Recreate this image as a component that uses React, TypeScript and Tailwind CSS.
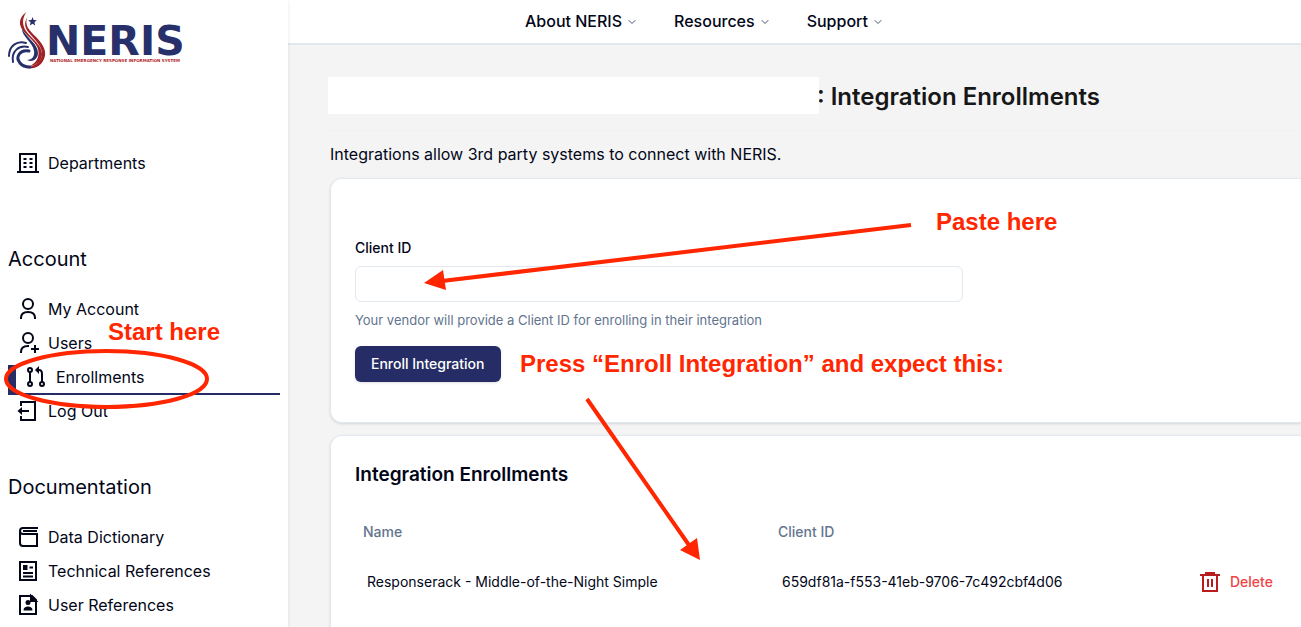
import React from "react";
import { ChevronDown } from "lucide-react";

type IconName =
  | "building"
  | "user"
  | "userPlus"
  | "pull"
  | "logout"
  | "book"
  | "article"
  | "contact";

type NavItem = { label: string; icon: IconName; active?: boolean };

const iconPaths: Record<IconName, React.ReactNode> = {
  building: (
    <>
      <path d="M4 21V3h16v18M1 21h22" />
      <path d="M7.5 8h3M13.5 8h3M7.5 12h3M13.5 12h3M7.5 16h3M13.5 16h3" />
    </>
  ),
  user: (
    <>
      <circle cx="12" cy="7" r="5" />
      <path d="M5 22v-1c0-4 3-6 7-6s7 2 7 6v1" />
    </>
  ),
  userPlus: (
    <>
      <circle cx="12" cy="7" r="5" />
      <path d="M5 22v-1c0-4 3-6 7-6h1M19 14v8M15 18h8" />
    </>
  ),
  pull: (
    <>
      <circle cx="6" cy="5" r="2" />
      <circle cx="6" cy="19" r="2" />
      <circle cx="18" cy="19" r="2" />
      <path d="M6 7v10M18 17V9q0-4-3-4h-2" />
      <path d="M15 1v8l-4-4z" fill="currentColor" stroke="none" />
    </>
  ),
  logout: (
    <>
      <path d="M5 7V3h14v18H5v-4M13 12H3" />
      <path d="M6 8v8L1.500 12z" fill="currentColor" stroke="none" />
    </>
  ),
  book: (
    <path d="M22 3H7Q4 3 4 6v12q0 3 3 3h14V9H7Q4 9 4 6M7 6h14" />
  ),
  article: (
    <>
      <path d="M4 3h16v18H4zM7 14h10M7 17.500h10M13.500 8.500H17" />
      <path d="M7 6h4.500v5H7z" fill="currentColor" stroke="none" />
    </>
  ),
  contact: (
    <>
      <path d="M4 3h12l4 4v14H4z" />
      <path d="M15 3v5h5z" fill="currentColor" />
      <circle cx="12" cy="9.500" r="2.500" fill="currentColor" stroke="none" />
      <path d="M7.500 17.500c0-3 2-4 4.500-4s4.500 1 4.500 4z" fill="currentColor" stroke="none" />
    </>
  ),
};

const accountItems: NavItem[] = [
  { label: "My Account", icon: "user" },
  { label: "Users", icon: "userPlus" },
  { label: "Enrollments", icon: "pull", active: true },
  { label: "Log Out", icon: "logout" },
];

const documentationItems: NavItem[] = [
  { label: "Data Dictionary", icon: "book" },
  { label: "Technical References", icon: "article" },
  { label: "User References", icon: "contact" },
];

const menus = ["About NERIS", "Resources", "Support"];

const enrollments = [
  {
    name: "Responserack - Middle-of-the-Night Simple",
    clientId: "659df81a-f553-41eb-9706-7c492cbf4d06",
  },
];

const Icon = ({ name }: { name: IconName }) => (
  <svg
    viewBox="0 0 24 24"
    className="size-6 shrink-0"
    fill="none"
    stroke="currentColor"
    strokeWidth="2"
    aria-hidden="true"
  >
    {iconPaths[name]}
  </svg>
);

const Logo = () => (
  <a href="#" aria-label="NERIS home" className="block">
    <svg width="184" height="60" viewBox="0 0 184 60" aria-hidden="true">
      {/* flame */}
      <path
        d="M18.500 1C10 7 10 15 17 22C25 30 33 36 30 46C29 50 26 53 22 55C30 54 34 49 34 43C34 34 24 28 18 20C14 14 14 7 18.500 1z"
        fill="#9f2226"
      />
      <path
        d="M19.500 6C16 14 21 19 28 26C36 34 40 42 35 50C31 57 24 58 18 57C27 55 33 51 34 44C35 36 27 29 22 23C16 17 16 11 19.500 6z"
        fill="#9f2226"
      />
      <path
        d="M14 18C14 26 25 31 26 40C27 45 24 49 19 49C24 52 30 48 30 42C30 33 19 27 14 18z"
        fill="#27306b"
      />
      {/* water */}
      <g fill="none" stroke="#27306b" strokeLinecap="round">
        <path d="M1 45C1 35 9 29 18 32" strokeWidth="2" />
        <path d="M5 51C3 40 11 34 20 36" strokeWidth="2" />
        <path d="M21 40C12 38 7 46 12 52Q15 56 22 56" strokeWidth="3" />
      </g>
      <path
        d="M24.500 6l1.100 3 3.300.2-2.500 2.100.8 3.200-2.700-1.700-2.700 1.700.8-3.200-2.500-2.100 3.300-.2z"
        fill="#27306b"
      />
      <text
        x="38"
        y="44"
        fill="#27306b"
        className="font-['DejaVu_Sans'] text-[41px] font-bold"
      >
        NERIS
      </text>
      <text
        x="42"
        y="51"
        fill="#b3262b"
        className="font-['DejaVu_Sans'] text-[4px] font-bold"
      >
        NATIONAL EMERGENCY RESPONSE INFORMATION SYSTEM
      </text>
    </svg>
  </a>
);

const NavList = ({ items }: { items: NavItem[] }) => (
  <ul className="flex flex-col gap-1">
    {items.map((item) => (
      <li key={item.label}>
        <a
          href="#"
          aria-current={item.active ? "page" : undefined}
          className={
            item.active
              ? "flex items-center gap-2 border-b-2 border-l-8 border-[#262c65] px-2 pb-1"
              : "flex items-center gap-2 border-b-2 border-transparent px-2 pb-1"
          }
        >
          <Icon name={item.icon} />
          {item.label}
        </a>
      </li>
    ))}
  </ul>
);

const Sidebar = () => (
  <aside className="z-10 w-72 shrink-0 bg-white px-2 pt-[11px] shadow-sm">
    <Logo />
    <nav className="mt-20">
      <NavList items={[{ label: "Departments", icon: "building" }]} />
      <h2 className="mt-16 mb-6 text-xl leading-7">Account</h2>
      <NavList items={accountItems} />
      <h2 className="mt-[44px] mb-6 text-xl leading-7">Documentation</h2>
      <NavList items={documentationItems} />
    </nav>
  </aside>
);

const EnrollForm = () => (
  <form className="rounded-l-xl border border-r-0 border-slate-200 bg-white px-6 pt-[59px] pb-10 shadow-sm">
    <label htmlFor="client-id" className="block text-sm font-medium">
      Client ID
    </label>
    <input
      id="client-id"
      type="text"
      className="mt-2 block h-9 w-full max-w-[608px] rounded-md border border-slate-200 px-3 text-sm"
    />
    <p className="mt-2 text-[13px] leading-5 text-slate-500">
      Your vendor will provide a Client ID for enrolling in their integration
    </p>
    <button
      type="button"
      className="mt-4 h-9 rounded-md bg-[#262c65] px-4 text-sm font-medium text-white shadow-sm"
    >
      Enroll Integration
    </button>
  </form>
);

const EnrollmentTable = () => (
  <section className="mt-3 flex-1 rounded-tl-xl border-t border-l border-slate-200 bg-white px-6 pt-6 shadow-sm">
    <h2 className="text-[19px] leading-[30px] font-semibold">
      Integration Enrollments
    </h2>
    <table className="mt-[22px] w-full table-fixed text-left text-sm">
      <thead>
        <tr className="h-10 text-slate-500">
          <th className="w-[415px] px-2 font-medium">Name</th>
          <th className="w-[420px] px-2 font-medium">Client ID</th>
          <th aria-label="Actions" />
        </tr>
      </thead>
      <tbody>
        {enrollments.map((e) => (
          <tr key={e.clientId} className="h-[60px]">
            <td className="px-3">{e.name}</td>
            <td className="px-3">{e.clientId}</td>
            <td>
              <button
                type="button"
                className="flex items-center gap-2 px-2 font-medium text-[#ef4444]"
              >
                <svg
                  viewBox="0 0 24 24"
                  className="size-6 text-[#b91c1c]"
                  fill="none"
                  stroke="currentColor"
                  strokeWidth="2"
                  aria-hidden="true"
                >
                  <path d="M2 5h20M7 3h10M5 5v16h14V5M10 9v8M14 9v8" />
                </svg>
                Delete
              </button>
            </td>
          </tr>
        ))}
      </tbody>
    </table>
  </section>
);

// Walkthrough notes drawn over the page
const Annotations = () => (
  <div className="pointer-events-none absolute inset-0 z-20 overflow-hidden font-['Liberation_Sans',sans-serif] text-2xl font-bold whitespace-nowrap text-[#ff2600]">
    <svg width="1301" height="627" className="absolute top-0 left-0" aria-hidden="true">
      <g fill="none" stroke="#ff2600" strokeWidth="4">
        <ellipse cx="106.500" cy="379" rx="100.500" ry="28" />
        <path d="M911 225L442 281M587 399L691 548" />
      </g>
      <path d="M424 283l19-13 3 20zM700 560l-20-10 17-12z" fill="#ff2600" />
    </svg>
    <p className="absolute top-[316px] left-[108px]">Start here</p>
    <p className="absolute top-[206px] left-[936px]">Paste here</p>
    <p className="absolute top-[348px] left-[520px]">
      Press “Enroll Integration” and expect this:
    </p>
  </div>
);

const App = () => {
  return (
    <div className="relative flex min-h-screen overflow-hidden bg-[#f4f4f4] font-['Inter',sans-serif] text-base text-slate-950">
      <Sidebar />
      <div className="flex min-w-0 flex-1 flex-col">
        <header className="border-b-2 border-slate-200 bg-white">
          <nav className="flex h-[43px] items-center gap-1 pb-0.5 pl-[221px]">
            {menus.map((menu) => (
              <button
                key={menu}
                type="button"
                className="flex items-center gap-1 px-4 font-medium"
              >
                {menu}
                <ChevronDown size={12} strokeWidth={2} className="mt-0.5 text-slate-600" />
              </button>
            ))}
          </nav>
        </header>
        <main className="flex flex-1 flex-col pt-8 pl-[42px]">
          <div className="-ml-0.5 flex items-center">
            <div className="z-10 h-[37px] w-[491px] bg-white" />
            <h1 className="-ml-0.5 pt-0.5 text-2xl font-semibold text-neutral-900">
              : Integration Enrollments
            </h1>
          </div>
          <p className="mt-4 mb-3 border-t border-[#f1f1f1] pt-[11px] leading-6">
            Integrations allow 3rd party systems to connect with NERIS.
          </p>
          <EnrollForm />
          <EnrollmentTable />
        </main>
      </div>
      <Annotations />
    </div>
  );
};

export default App;
